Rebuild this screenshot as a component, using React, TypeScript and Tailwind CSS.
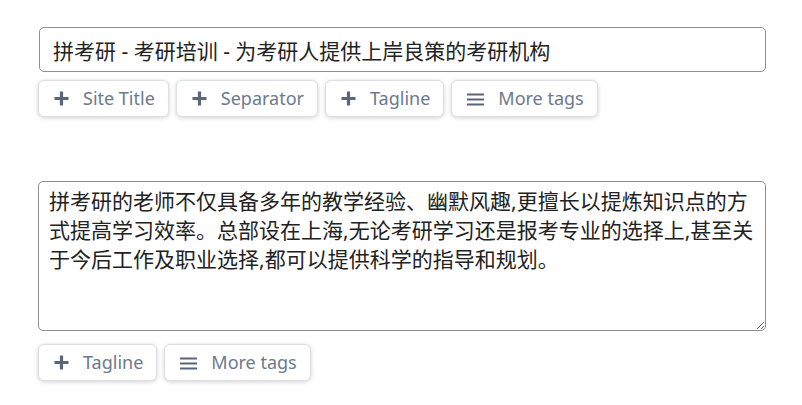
const font = { fontFamily: '"Noto Sans", "Noto Sans CJK SC", sans-serif' };

function PlusIcon() {
  return (
    <svg width="15" height="15" viewBox="0 0 15 15" className="text-[#5a6779]">
      <path d="M7.5 0.5v14M0.5 7.5h14" stroke="currentColor" strokeWidth="3.2" />
    </svg>
  );
}

function MenuIcon() {
  return (
    <svg width="17" height="14" viewBox="0 0 17 14" className="text-[#5a6779]">
      <path d="M0 2.5h17M0 7.5h17M0 12.5h17" stroke="currentColor" strokeWidth="2.2" />
    </svg>
  );
}

function TagButton({ icon, label }: { icon: "plus" | "menu"; label: string }) {
  return (
    <button
      type="button"
      className="flex h-[37px] items-center gap-[14px] rounded-[6px] border border-[#dcdfe4] bg-white pl-[15px] pr-[13px] text-[18px] text-[#6b7a8b] shadow-[0_1px_4px_rgba(0,0,0,0.18)]"
    >
      {icon === "plus" ? <PlusIcon /> : <MenuIcon />}
      <span>{label}</span>
    </button>
  );
}

export default function App() {
  return (
    <main className="min-h-screen w-full bg-white pl-[38px] pr-[36px] pt-[27px]" style={font}>
      <input
        className="ml-px h-[45px] w-[727px] rounded-[5px] border border-[#8f8f8f] px-[13px] text-[21px] text-[#222] outline-none"
        style={font}
        defaultValue="拼考研 - 考研培训 - 为考研人提供上岸良策的考研机构"
      />
      <div className="mt-[8px] flex gap-[7px]">
        <TagButton icon="plus" label="Site Title" />
        <TagButton icon="plus" label="Separator" />
        <TagButton icon="plus" label="Tagline" />
        <TagButton icon="menu" label="More tags" />
      </div>

      <textarea
        className="mt-[64px] block h-[150px] w-[728px] resize-y rounded-[5px] border border-[#8f8f8f] px-[10px] pt-[5px] text-[21px] leading-[29px] text-[#222] outline-none"
        style={font}
        defaultValue="拼考研的老师不仅具备多年的教学经验、幽默风趣,更擅长以提炼知识点的方式提高学习效率。总部设在上海,无论考研学习还是报考专业的选择上,甚至关于今后工作及职业选择,都可以提供科学的指导和规划。"
      />
      <div className="mt-[13px] flex gap-[7px]">
        <TagButton icon="plus" label="Tagline" />
        <TagButton icon="menu" label="More tags" />
      </div>
    </main>
  );
}
